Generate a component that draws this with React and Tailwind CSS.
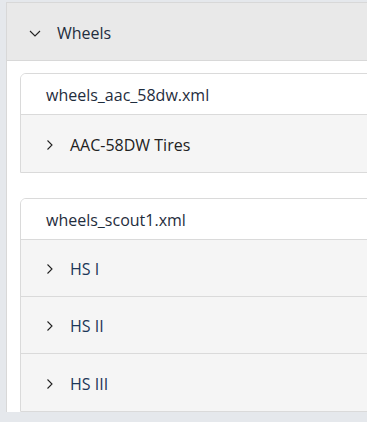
const groups = [
  { file: "wheels_aac_58dw.xml", items: ["AAC-58DW Tires"], itemColor: "text-[#222]" },
  { file: "wheels_scout1.xml", items: ["HS I", "HS II", "HS III"], itemColor: "text-[#1c3658]" },
];

function Chevron({ down }) {
  return (
    <svg width="12" height="12" viewBox="0 0 12 12" fill="none" stroke="#222" strokeWidth="1.1">
      {down ? <path d="M1 4l5 5 5-5" /> : <path d="M3.5 1.5L8 6l-4.5 4.5" />}
    </svg>
  );
}

export default function App() {
  return (
    <div
      className="h-screen w-full overflow-hidden bg-[#e5e8ec] pl-[6px] pt-[2px]"
      style={{ fontFamily: '"Open Sans", "Noto Sans", sans-serif' }}
    >
      <div className="w-[420px] border-l border-t border-[#d8d8d8] bg-white">
        <div className="flex h-[58px] items-center border-b border-[#d8d8d8] bg-[#e9e9e9] pl-[22px] pt-[2px] text-[16px] text-[#1f2d3d]">
          <Chevron down />
          <span className="ml-[16px]">Wheels</span>
        </div>
        <div className="pl-[13px] pt-[12px]">
          {groups.map((g, i) => (
            <div
              key={g.file}
              className={
                "overflow-hidden rounded-tl-[6px] border border-[#dadada] " +
                (i === 0 ? "mb-[25px]" : "")
              }
            >
              <div className="flex h-[41px] items-center border-b border-[#dadada] bg-white pl-[25px] pt-[2px] text-[16px] text-[#1f2d3d]">
                {g.file}
              </div>
              {g.items.map((it, j) => (
                <div
                  key={it}
                  className={
                    "flex h-[57px] items-center bg-[#f5f5f5] pl-[23px] pt-[2px] text-[16px] " +
                    g.itemColor +
                    (j < g.items.length - 1 ? " border-b border-[#dadada]" : "")
                  }
                >
                  <Chevron />
                  <span className="ml-[14px]">{it}</span>
                </div>
              ))}
            </div>
          ))}
        </div>
      </div>
    </div>
  );
}
